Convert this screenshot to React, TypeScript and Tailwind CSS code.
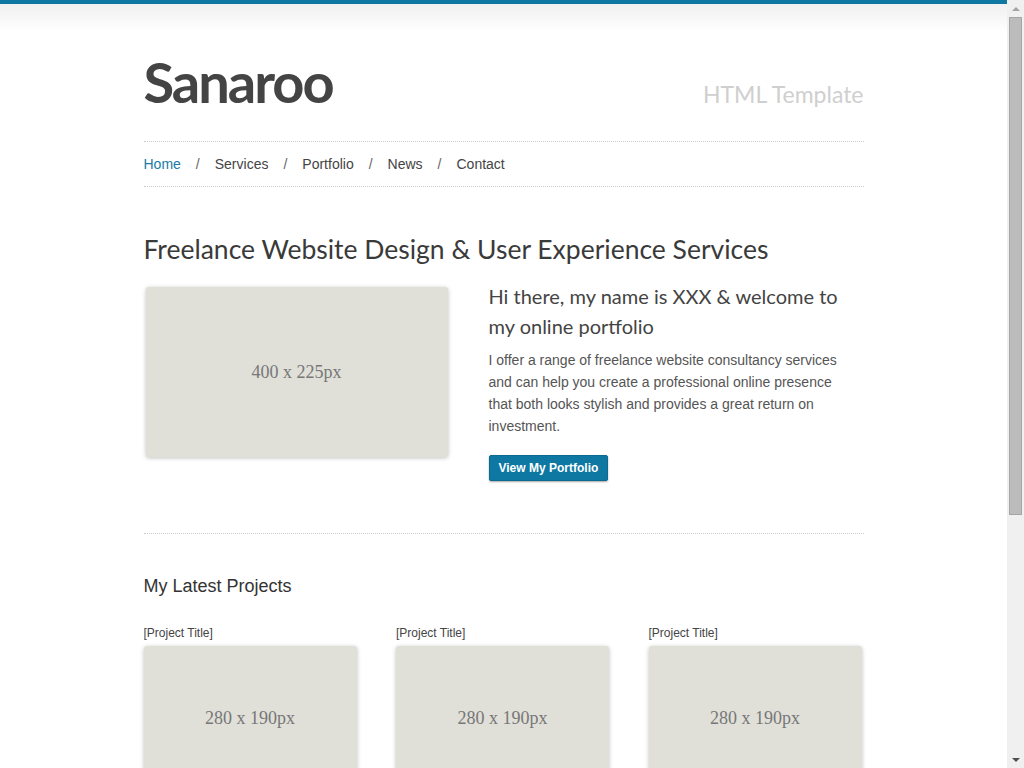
const navItems = ["Home", "Services", "Portfolio", "News", "Contact"];

const projects = ["[Project Title]", "[Project Title]", "[Project Title]"];

function Placeholder({ label, className }: { label: string; className: string }) {
  return (
    <div
      className={`flex items-center justify-center rounded-[3px] bg-[#e0e0d9] text-[#777] shadow-[0_1px_4px_rgba(0,0,0,0.25)] font-['Liberation_Serif',serif] ${className}`}
    >
      {label}
    </div>
  );
}

// window scrollbar as it shows in the reference
function Scrollbar() {
  return (
    <aside className="fixed top-0 right-0 flex h-screen w-[17px] flex-col bg-[#f0f0f0]">
      <div className="flex h-[17px] items-center justify-center">
        <span className="h-0 w-0 border-x-[4px] border-b-[4px] border-x-transparent border-b-[#a3a3a3]" />
      </div>
      <div className="mx-[2px] h-[498px] border border-[#a6a6a6] bg-[#bcbcbc]" />
      <div className="flex-1" />
      <div className="flex h-[17px] items-center justify-center">
        <span className="h-0 w-0 border-x-[4px] border-t-[4px] border-x-transparent border-t-[#505050]" />
      </div>
    </aside>
  );
}

export default function App() {
  return (
    <div className="min-h-[1118px] border-t-4 border-[#0e78a2] bg-[linear-gradient(#f0f0f0,#fff_28px)] pr-[17px] font-['Liberation_Sans',Arial,sans-serif] text-[#444]">
      <div className="mx-auto w-[720px]">
        {/* header */}
        <header className="flex items-baseline justify-between pt-[50px] pb-[31px]">
          <h1 className="font-['Lato',sans-serif] text-[56px] font-bold leading-none tracking-[-2px] text-[#444]">
            Sanaroo
          </h1>
          <p className="font-['Lato',sans-serif] text-[23px] leading-none text-[#cfcfcf]">
            HTML Template
          </p>
        </header>

        <nav className="flex h-[46px] items-center border-y border-dotted border-[#ccc] text-[14px] leading-5">
          {navItems.map((item, i) => (
            <div key={item} className="flex items-center">
              {i > 0 && <span className="mx-[15px] text-[#666]">/</span>}
              <a href="#" className={i === 0 ? "text-[#1c7aa6]" : "text-[#444]"}>
                {item}
              </a>
            </div>
          ))}
        </nav>

        {/* intro */}
        <section className="pt-[45px] pb-[52px]">
          <h2 className="font-['Lato',sans-serif] text-[26.5px] leading-[34px] text-[#3a3a3a]">
            Freelance Website Design &amp; User Experience Services
          </h2>
          <div className="mt-[21px] flex gap-[41px]">
            <Placeholder label="400 x 225px" className="ml-[2px] h-[170px] w-[302px] shrink-0 text-[18px]" />
            <div className="w-[360px] -mt-[6px]">
              <h3 className="font-['Lato',sans-serif] text-[20px] leading-[30px] text-[#444]">
                Hi there, my name is XXX &amp; welcome to my online portfolio
              </h3>
              <p className="mt-[8px] text-[14px] leading-[22px] text-[#555]">
                I offer a range of freelance website consultancy services and can help you create a
                professional online presence that both looks stylish and provides a great return on
                investment.
              </p>
              <button className="mt-[18px] h-[26px] rounded-[2px] border border-[#0b6a90] bg-[#0e78a2] px-[9px] text-[12px] font-bold text-white shadow-[0_1px_2px_rgba(0,0,0,0.35)]">
                View My Portfolio
              </button>
            </div>
          </div>
        </section>

        {/* projects */}
        <section className="border-t border-dotted border-[#ccc] pt-[40px]">
          <h2 className="text-[18px] leading-6 text-[#333]">My Latest Projects</h2>
          <div className="mt-[27px] flex gap-[39.5px]">
            {projects.map((title, i) => (
              <div key={i} className="w-[213px]">
                <p className="text-[12px] leading-4 text-[#444]">{title}</p>
                <Placeholder label="280 x 190px" className="mt-[5px] h-[145px] w-[213px] text-[18px]" />
              </div>
            ))}
          </div>
        </section>

        <footer className="mt-[120px] border-t border-dotted border-[#ccc] py-[30px] text-[12px] text-[#888]">
          &copy; Sanaroo HTML Template
        </footer>
      </div>
      <Scrollbar />
    </div>
  );
}
